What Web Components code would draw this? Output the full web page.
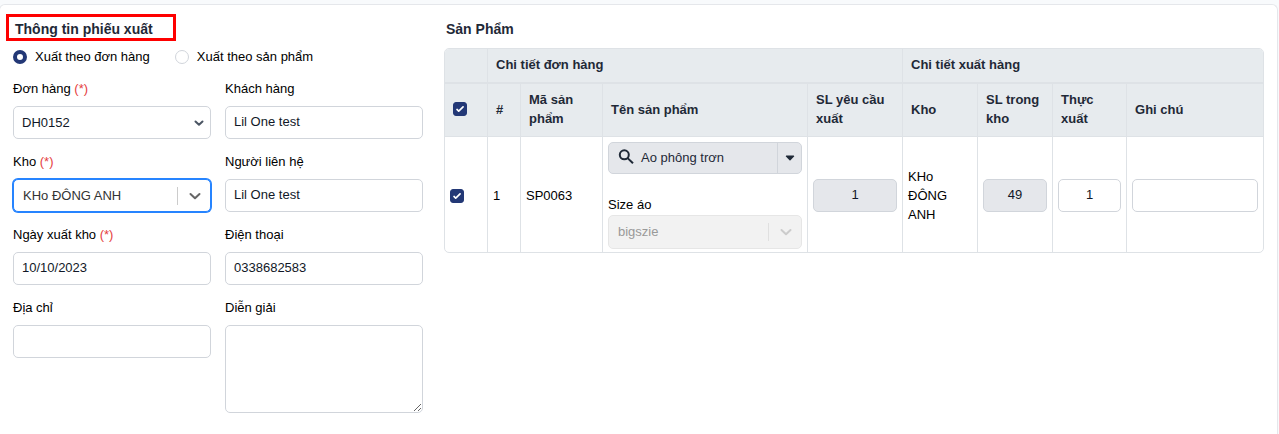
<!DOCTYPE html>
<html lang="vi">
<head>
<meta charset="utf-8">
<meta name="viewport" content="width=device-width, initial-scale=1">
<title>Phiếu xuất kho</title>
<style>
  :root {
    --line: #d1d5db;
    --cell-line: #dee2e6;
    --navy: #233876;
    --ink: #1f2937;
    --muted: #e5e7eb;
  }

  body {
    margin: 0;
    padding-top: 4px;
    background: #f8fafc;
    color: #000;
    font: 13px/19px "Liberation Sans", Arial, sans-serif;
  }
</style>
</head>
<body>
<export-card>
  <form-section heading="Thông tin phiếu xuất" marked>
    <source-choice></source-choice>
    <field-grid>
      <select-field label="Đơn hàng" value="DH0152" required></select-field>
      <text-field label="Khách hàng" value="Lil One test"></text-field>
      <select-field label="Kho" value="KHo ĐÔNG ANH" kind="split" active required></select-field>
      <text-field label="Người liên hệ" value="Lil One test"></text-field>
      <text-field label="Ngày xuất kho" value="10/10/2023" required></text-field>
      <text-field label="Điện thoại" value="0338682583"></text-field>
      <text-field label="Địa chỉ"></text-field>
      <text-field label="Diễn giải" multiline></text-field>
    </field-grid>
  </form-section>
  <form-section heading="Sản Phẩm">
    <product-table></product-table>
  </form-section>
</export-card>

<script>
"use strict";

// SHARED STYLES
const controls = `
  * { box-sizing: border-box; }

  input, select, textarea, button {
    font: inherit;
    color: inherit;
    margin: 0;
  }

  .control {
    display: block;
    width: 100%;
    height: 33px;
    padding: 0 8px 2px;
    color: #111827;
    background: #fff;
    border: 1px solid var(--line);
    border-radius: 5px;
    outline: none;
    appearance: none;
  }

  .control:disabled {
    background: var(--muted);
    opacity: 1;
  }

  input[type="checkbox"] {
    display: block;
    width: 14px;
    height: 14px;
    appearance: none;
    border: 1px solid var(--line);
    border-radius: 3px;
  }

  input[type="checkbox"]:checked {
    border-color: var(--navy);
    background: var(--navy) url("data:image/svg+xml,%3Csvg viewBox='0 0 16 16' fill='white' xmlns='http://www.w3.org/2000/svg'%3E%3Cpath d='M12.2 4.8a1 1 0 0 1 0 1.4l-5 5a1 1 0 0 1-1.4 0l-2-2a1 1 0 0 1 1.4-1.4L6.5 9.1l4.3-4.3a1 1 0 0 1 1.4 0z'/%3E%3C/svg%3E") center / 14px no-repeat;
  }
`;

function render(host, html) {
  const temp = document.createElement("template");
  temp.innerHTML = html;
  const shadow = host.attachShadow({ mode: "open" });
  shadow.append(temp.content.cloneNode(true));
  return shadow;
}

// COMPONENTS

// || CARD ||
class ExportCard extends HTMLElement {
  constructor() {
    super();
    render(this, `
    <style>
      :host {
        display: grid;
        grid-template-columns: minmax(0, 1fr) minmax(0, 2fr);
        gap: 21px;
        box-sizing: border-box;
        min-height: calc(100vh - 4px);
        margin: 0 1px 0 -1px;
        padding: 9px 13px 21px;
        background: #fff;
        border: 1px solid #e5e7eb;
        border-bottom: 0;
        border-radius: 6px 6px 0 0;
      }
    </style>
    <slot></slot>
    `);
  }
}

// || SECTION ||
class FormSection extends HTMLElement {
  constructor() {
    super();
    render(this, `
    <style>
      :host { display: block; }

      h2 {
        box-sizing: border-box;
        width: fit-content;
        height: 27px;
        margin: 0 0 7px;
        padding: 2px 0 0 2px;
        color: var(--ink);
        font-size: 14px;
        line-height: 26px;
      }

      :host([marked]) h2 {
        margin-left: -7px;
        padding: 0 20px 0 6px;
        border: 3px solid #fe0000;
        line-height: 24px;
      }
    </style>
    <h2>${this.getAttribute("heading")}</h2>
    <slot></slot>
    `);
  }
}

// || RADIOS ||
class SourceChoice extends HTMLElement {
  constructor() {
    super();
    render(this, `
    <style>
      ${controls}
      :host {
        display: flex;
        gap: 25px;
        margin-bottom: 14px;
        line-height: 18px;
      }

      label {
        display: flex;
        align-items: center;
        gap: 8px;
      }

      input {
        width: 14px;
        height: 14px;
        appearance: none;
        background: #fff;
        border: 1px solid var(--line);
        border-radius: 50%;
      }

      input:checked { border: 4px solid var(--navy); }
    </style>
    <label><input type="radio" name="source" checked>Xuất theo đơn hàng</label>
    <label><input type="radio" name="source">Xuất theo sản phẩm</label>
    `);
  }
}

// || FIELD GRID ||
class FieldGrid extends HTMLElement {
  constructor() {
    super();
    render(this, `
    <style>
      :host {
        display: grid;
        grid-template-columns: repeat(2, minmax(0, 1fr));
        align-items: start;
        gap: 14px;
      }
    </style>
    <slot></slot>
    `);
  }
}

const fieldLabel = `
  :host { display: block; }

  label {
    display: block;
    margin-bottom: 8px;
    line-height: 18px;
  }

  label span { color: #e53e3e; }
`;

function labelHtml(host) {
  const mark = host.hasAttribute("required") ? " <span>(*)</span>" : "";
  return `<label for="control">${host.getAttribute("label")}${mark}</label>`;
}

// || TEXT FIELD ||
class TextField extends HTMLElement {
  constructor() {
    super();
    const value = this.getAttribute("value") || "";
    const control = this.hasAttribute("multiline")
      ? `<textarea id="control" class="control"></textarea>`
      : `<input id="control" class="control" type="text" value="${value}">`;
    render(this, `
    <style>
      ${controls}
      ${fieldLabel}
      textarea.control {
        height: 88px;
        padding: 7px 8px;
        resize: both;
      }
    </style>
    ${labelHtml(this)}
    ${control}
    `);
  }
}

// || SELECT FIELD ||
class SelectField extends HTMLElement {
  constructor() {
    super();
    render(this, `
    <style>
      ${controls}
      ${fieldLabel}
      .box {
        display: grid;
        grid-template-columns: minmax(0, 1fr) 34px;
        align-items: center;
      }

      .control {
        grid-area: 1 / 1 / 2 / 3;
        padding-bottom: 0;
      }

      .arrow {
        display: flex;
        grid-area: 1 / 2;
        align-items: center;
        justify-content: center;
        height: 18px;
        color: #4b5563;
        pointer-events: none;
      }

      :host(:not([kind])) .arrow { margin-left: 10px; }

      :host([kind="split"]) .control {
        padding: 0 9px 1px;
        color: #333;
      }

      :host([kind="split"]) .arrow {
        color: #666;
        border-left: 1px solid #ccc;
      }

      :host([active]) .control {
        border-color: #2684ff;
        box-shadow: 0 0 0 1px #2684ff;
      }

      :host([disabled]) label { margin-bottom: 1px; }

      :host([disabled]) .control {
        height: 34px;
        color: #999;
        background: #f2f2f2;
        border-color: #e6e6e6;
      }

      :host([disabled]) .arrow {
        color: #ccc;
        border-color: #e0e0e0;
      }
    </style>
    ${labelHtml(this)}
    <div class="box">
      <select id="control" class="control"${this.hasAttribute("disabled") ? " disabled" : ""}>
        <option>${this.getAttribute("value")}</option>
      </select>
      <span class="arrow">
        <svg width="12" height="12" viewBox="0 0 12 12" fill="none" stroke="currentColor" stroke-width="2" stroke-linecap="round" stroke-linejoin="round"><path d="${this.getAttribute("kind") ? "M1.5 4 6 8.3 10.5 4" : "M2.5 4.5 6 7.8 9.5 4.5"}"/></svg>
      </span>
    </div>
    `);
  }
}

// || PRODUCT PICKER ||
class ProductPicker extends HTMLElement {
  constructor() {
    super();
    render(this, `
    <style>
      ${controls}
      :host {
        display: flex;
        height: 32px;
        overflow: hidden;
        background: var(--muted);
        border: 1px solid var(--line);
        border-radius: 5px;
        box-sizing: border-box;
        color: var(--ink);
      }

      button {
        display: flex;
        align-items: center;
        padding: 0;
        background: none;
        border: 0;
      }

      .name {
        flex: 1;
        gap: 7px;
        padding: 0 0 2px 9px;
      }

      .more {
        justify-content: center;
        width: 24px;
        border-left: 1px solid var(--line);
      }
    </style>
    <button type="button" class="name">
      <svg width="16" height="16" viewBox="0 0 16 16" fill="none" stroke="currentColor" stroke-width="2"><circle cx="6.3" cy="5.8" r="4.5"/><path d="M9.6 9.1 15 14.3"/></svg>
      <slot></slot>
    </button>
    <button type="button" class="more" aria-label="Chọn sản phẩm">
      <svg width="10" height="6" viewBox="0 0 10 6" fill="currentColor"><path d="M1.3.5h7.4a.6.6 0 0 1 .4 1L5.500 5.300a.7.7 0 0 1-1 0L.9 1.500a.6.6 0 0 1 .4-1z"/></svg>
    </button>
    `);
  }
}

// || PRODUCT TABLE ||
class ProductTable extends HTMLElement {
  constructor() {
    super();
    render(this, `
    <style>
      ${controls}
      :host {
        display: block;
        overflow: hidden;
        border: 1px solid var(--cell-line);
        border-radius: 5px;
      }

      table {
        width: 100%;
        table-layout: fixed;
        border-spacing: 0;
      }

      th, td {
        text-align: left;
        vertical-align: middle;
        border-right: 1px solid var(--cell-line);
      }

      tr > :last-child { border-right: 0; }

      th {
        padding: 6px 7px 8px 8px;
        color: var(--ink);
        background: #e7ebee;
        border-bottom: 1px solid var(--cell-line);
      }

      .groups th { border-bottom-width: 2px; }

      td { padding: 5px 5px 3px; }

      td .control { text-align: center; }

      td select-field { margin-top: 22px; }
    </style>
    <table>
      <colgroup>
        <col style="width: 43px">
        <col style="width: 33px">
        <col style="width: 82px">
        <col style="width: 205px">
        <col style="width: 95px">
        <col style="width: 75px">
        <col style="width: 75px">
        <col style="width: 74px">
        <col>
      </colgroup>
      <thead>
        <tr class="groups">
          <th></th>
          <th colspan="4">Chi tiết đơn hàng</th>
          <th colspan="4">Chi tiết xuất hàng</th>
        </tr>
        <tr>
          <th><input type="checkbox" aria-label="Chọn tất cả" checked></th>
          <th>#</th>
          <th>Mã sản phẩm</th>
          <th>Tên sản phẩm</th>
          <th>SL yêu cầu xuất</th>
          <th>Kho</th>
          <th>SL trong kho</th>
          <th>Thực xuất</th>
          <th>Ghi chú</th>
        </tr>
      </thead>
      <tbody>
        <tr>
          <td><input type="checkbox" aria-label="Chọn dòng 1" checked></td>
          <td>1</td>
          <td>SP0063</td>
          <td>
            <product-picker>Ao phông trơn</product-picker>
            <select-field label="Size áo" value="bigszie" kind="split" disabled></select-field>
          </td>
          <td><input class="control" type="text" aria-label="SL yêu cầu xuất" value="1" disabled></td>
          <td>KHo ĐÔNG ANH</td>
          <td><input class="control" type="text" aria-label="SL trong kho" value="49" disabled></td>
          <td><input class="control" type="text" aria-label="Thực xuất" value="1"></td>
          <td><input class="control" type="text" aria-label="Ghi chú"></td>
        </tr>
      </tbody>
    </table>
    `);
  }
}

customElements.define("export-card", ExportCard);
customElements.define("form-section", FormSection);
customElements.define("source-choice", SourceChoice);
customElements.define("field-grid", FieldGrid);
customElements.define("text-field", TextField);
customElements.define("select-field", SelectField);
customElements.define("product-picker", ProductPicker);
customElements.define("product-table", ProductTable);
</script>
</body>
</html>
